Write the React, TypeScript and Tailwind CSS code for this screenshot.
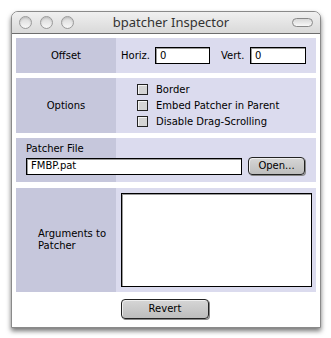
import React from "react";

const font = "font-['DejaVu_Sans',sans-serif]";

const Light = ({ color }: { color: string }) => (
  <div
    className={`w-[13px] h-[13px] rounded-full border border-[#9a9a9a] ${color} shadow-[inset_0_1px_2px_rgba(0,0,0,0.15)]`}
  />
);

const Check = ({ label }: { label: string }) => (
  <div className="flex items-center gap-[8px] h-[15px]">
    <div className="w-[11px] h-[11px] border border-[#222] bg-[#d4d4d4] shadow-[inset_1px_1px_0_#f4f4f4]" />
    <span className="text-[10px] leading-none text-black">{label}</span>
  </div>
);

const Field = ({ value, className }: { value: string; className: string }) => (
  <div
    className={`bg-white border border-black shadow-[inset_1px_1px_0_#9a9a9a] flex items-center pl-[4px] text-[10px] leading-none ${className}`}
  >
    {value}
  </div>
);

const Btn = ({ label, className }: { label: string; className: string }) => (
  <button
    className={`rounded-[4px] border border-[#222] bg-gradient-to-b from-[#d6d6d6] to-[#bdbdbd] shadow-[inset_1px_1px_0_#eee,1px_1px_0_#888] text-[10px] leading-none text-black ${className}`}
  >
    {label}
  </button>
);

export default function App() {
  return (
    <div className={`w-[331px] h-[338px] bg-white pt-[11px] pl-[11px] ${font}`}>
      <div className="w-[310px] h-[317px] bg-white border border-[#8a8a8a] rounded-t-[7px] shadow-[0_3px_5px_rgba(0,0,0,0.55)] flex flex-col">
        {/* Title bar */}
        <div className="h-[22px] rounded-t-[6px] bg-gradient-to-b from-[#f0f0f0] to-[#d9d9d9] border-b border-[#6d6d6d] flex items-center px-[7px] relative">
          <div className="flex gap-[8px]">
            <Light color="bg-gradient-to-b from-[#d8d8d8] to-[#f8f8f8]" />
            <Light color="bg-gradient-to-b from-[#d8d8d8] to-[#f8f8f8]" />
            <Light color="bg-gradient-to-b from-[#d8d8d8] to-[#f8f8f8]" />
          </div>
          <div className="flex-1 text-center text-[13px] text-[#333] font-['Noto_Sans',sans-serif] pr-[24px]">
            bpatcher Inspector
          </div>
          <div className="w-[21px] h-[9px] rounded-full border border-[#888] bg-gradient-to-b from-[#d8d8d8] to-[#f8f8f8]" />
        </div>

        {/* Body */}
        <div className="flex-1 flex flex-col px-[4px] pt-[4px] text-[10px]">
          {/* Offset */}
          <div className="flex h-[35px] bg-[#dbdbee]">
            <div className="w-[100px] bg-[#c6c7dc] flex items-center justify-center">Offset</div>
            <div className="flex items-center pl-[5px]">
              <span className="w-[30px]">Horiz.</span>
              <Field value="0" className="w-[55px] h-[17px] ml-[4px]" />
              <span className="ml-[11px] w-[24px]">Vert.</span>
              <Field value="0" className="w-[56px] h-[17px] ml-[5px]" />
            </div>
          </div>

          {/* Options */}
          <div className="flex h-[55px] bg-[#dbdbee] mt-[5px]">
            <div className="w-[100px] bg-[#c6c7dc] flex items-center justify-center">Options</div>
            <div className="flex flex-col justify-center pl-[21px] gap-[1px]">
              <Check label="Border" />
              <Check label="Embed Patcher in Parent" />
              <Check label="Disable Drag-Scrolling" />
            </div>
          </div>

          {/* Patcher file */}
          <div className="h-[44px] mt-[5px] bg-[linear-gradient(to_right,#c6c7dc_100px,#dbdbee_100px)] flex flex-col pl-[10px] pt-[5px]">
            <div className="leading-none h-[13px] pt-[1px]">Patcher File</div>
            <div className="flex items-center mt-[1px]">
              <Field value="FMBP.pat" className="w-[216px] h-[17px]" />
              <Btn label="Open..." className="w-[57px] h-[18px] ml-[6px]" />
            </div>
          </div>

          {/* Arguments */}
          <div className="flex h-[104px] bg-[#dbdbee] mt-[6px]">
            <div className="w-[100px] bg-[#c6c7dc] flex items-center pl-[22px] leading-[12px]">
              Arguments to
              <br />
              Patcher
            </div>
            <div className="flex-1 pl-[5px] pr-[4px] pt-[5px] pb-[5px]">
              <div className="w-full h-full bg-white border border-black shadow-[inset_1px_1px_0_#9a9a9a]" />
            </div>
          </div>

          <div className="flex justify-center mt-[7px] pr-[2px]">
            <Btn label="Revert" className="w-[88px] h-[20px]" />
          </div>
        </div>
      </div>
    </div>
  );
}
